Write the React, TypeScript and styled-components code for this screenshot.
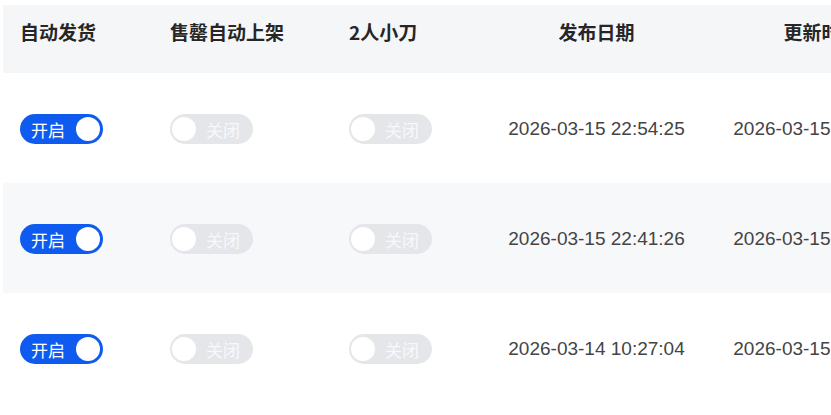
import React from "react";
import styled, { createGlobalStyle } from "styled-components";

const Global = createGlobalStyle`
  html, body { margin: 0; padding: 0; background: #ffffff; overflow: hidden; }
  body { font-family: "Liberation Sans", "Noto Sans CJK SC", sans-serif; }
`;

const COLS = "150px 179px 152px 225px 225px";

const Table = styled.div`
  margin: 5px 0 0 3px;
  width: 931px;
  display: flex;
  flex-direction: column;
`;

const HeaderRow = styled.div`
  display: grid;
  grid-template-columns: ${COLS};
  height: 68px;
  padding-top: 12px;
  box-sizing: border-box;
  background: #f5f6f8;
  align-items: start;
`;

const Row = styled.div<{ $striped?: boolean }>`
  display: grid;
  grid-template-columns: ${COLS};
  height: 110px;
  align-items: center;
  background: ${(p) => (p.$striped ? "#f7f8fa" : "#ffffff")};
`;

const Th = styled.div<{ $center?: boolean }>`
  padding: 0 17px;
  font-family: "Noto Sans CJK SC", "Liberation Sans", sans-serif;
  font-size: 19px;
  font-weight: 700;
  line-height: 30px;
  color: #262626;
  white-space: nowrap;
  text-align: ${(p) => (p.$center ? "center" : "left")};
`;

const Td = styled.div<{ $center?: boolean }>`
  padding: 0 17px;
  display: flex;
  justify-content: ${(p) => (p.$center ? "center" : "flex-start")};
  align-items: center;
  margin-top: 2px;
`;

const DateText = styled.span`
  font-family: "Liberation Sans", sans-serif;
  font-size: 19px;
  color: #444444;
  white-space: nowrap;
`;

const Switch = styled.div<{ $on: boolean }>`
  position: relative;
  width: 83px;
  height: 30px;
  border-radius: 15px;
  box-sizing: border-box;
  background: ${(p) => (p.$on ? "#0f5bf0" : "#e4e6ea")};
  display: flex;
  align-items: center;
  justify-content: ${(p) => (p.$on ? "flex-start" : "flex-end")};
  padding: ${(p) => (p.$on ? "0 0 0 11px" : "0 13px 0 0")};
`;

const SwitchLabel = styled.span<{ $on: boolean }>`
  font-family: "Noto Sans CJK SC", sans-serif;
  font-size: 17px;
  line-height: 1;
  color: ${(p) => (p.$on ? "#ffffff" : "#f7f8fa")};
`;

const Knob = styled.span<{ $on: boolean }>`
  position: absolute;
  top: 3px;
  ${(p) => (p.$on ? "right: 3px;" : "left: 2px;")}
  width: 24px;
  height: 24px;
  border-radius: 50%;
  background: #ffffff;
`;

const Toggle = ({ on }: { on: boolean }) => (
  <Switch $on={on}>
    <SwitchLabel $on={on}>{on ? "开启" : "关闭"}</SwitchLabel>
    <Knob $on={on} />
  </Switch>
);

const rows = [
  { pub: "2026-03-15 22:54:25", upd: "2026-03-15 22:54:25" },
  { pub: "2026-03-15 22:41:26", upd: "2026-03-15 22:41:26" },
  { pub: "2026-03-14 10:27:04", upd: "2026-03-15 10:27:04" },
];

export default function App() {
  return (
    <>
      <Global />
      <Table>
        <HeaderRow>
          <Th>自动发货</Th>
          <Th>售罄自动上架</Th>
          <Th>2人小刀</Th>
          <Th $center>发布日期</Th>
          <Th $center>更新时间</Th>
        </HeaderRow>
        {rows.map((r, i) => (
          <Row key={i} $striped={i % 2 === 1}>
            <Td><Toggle on /></Td>
            <Td><Toggle on={false} /></Td>
            <Td><Toggle on={false} /></Td>
            <Td $center><DateText>{r.pub}</DateText></Td>
            <Td $center><DateText>{r.upd}</DateText></Td>
          </Row>
        ))}
      </Table>
    </>
  );
}
